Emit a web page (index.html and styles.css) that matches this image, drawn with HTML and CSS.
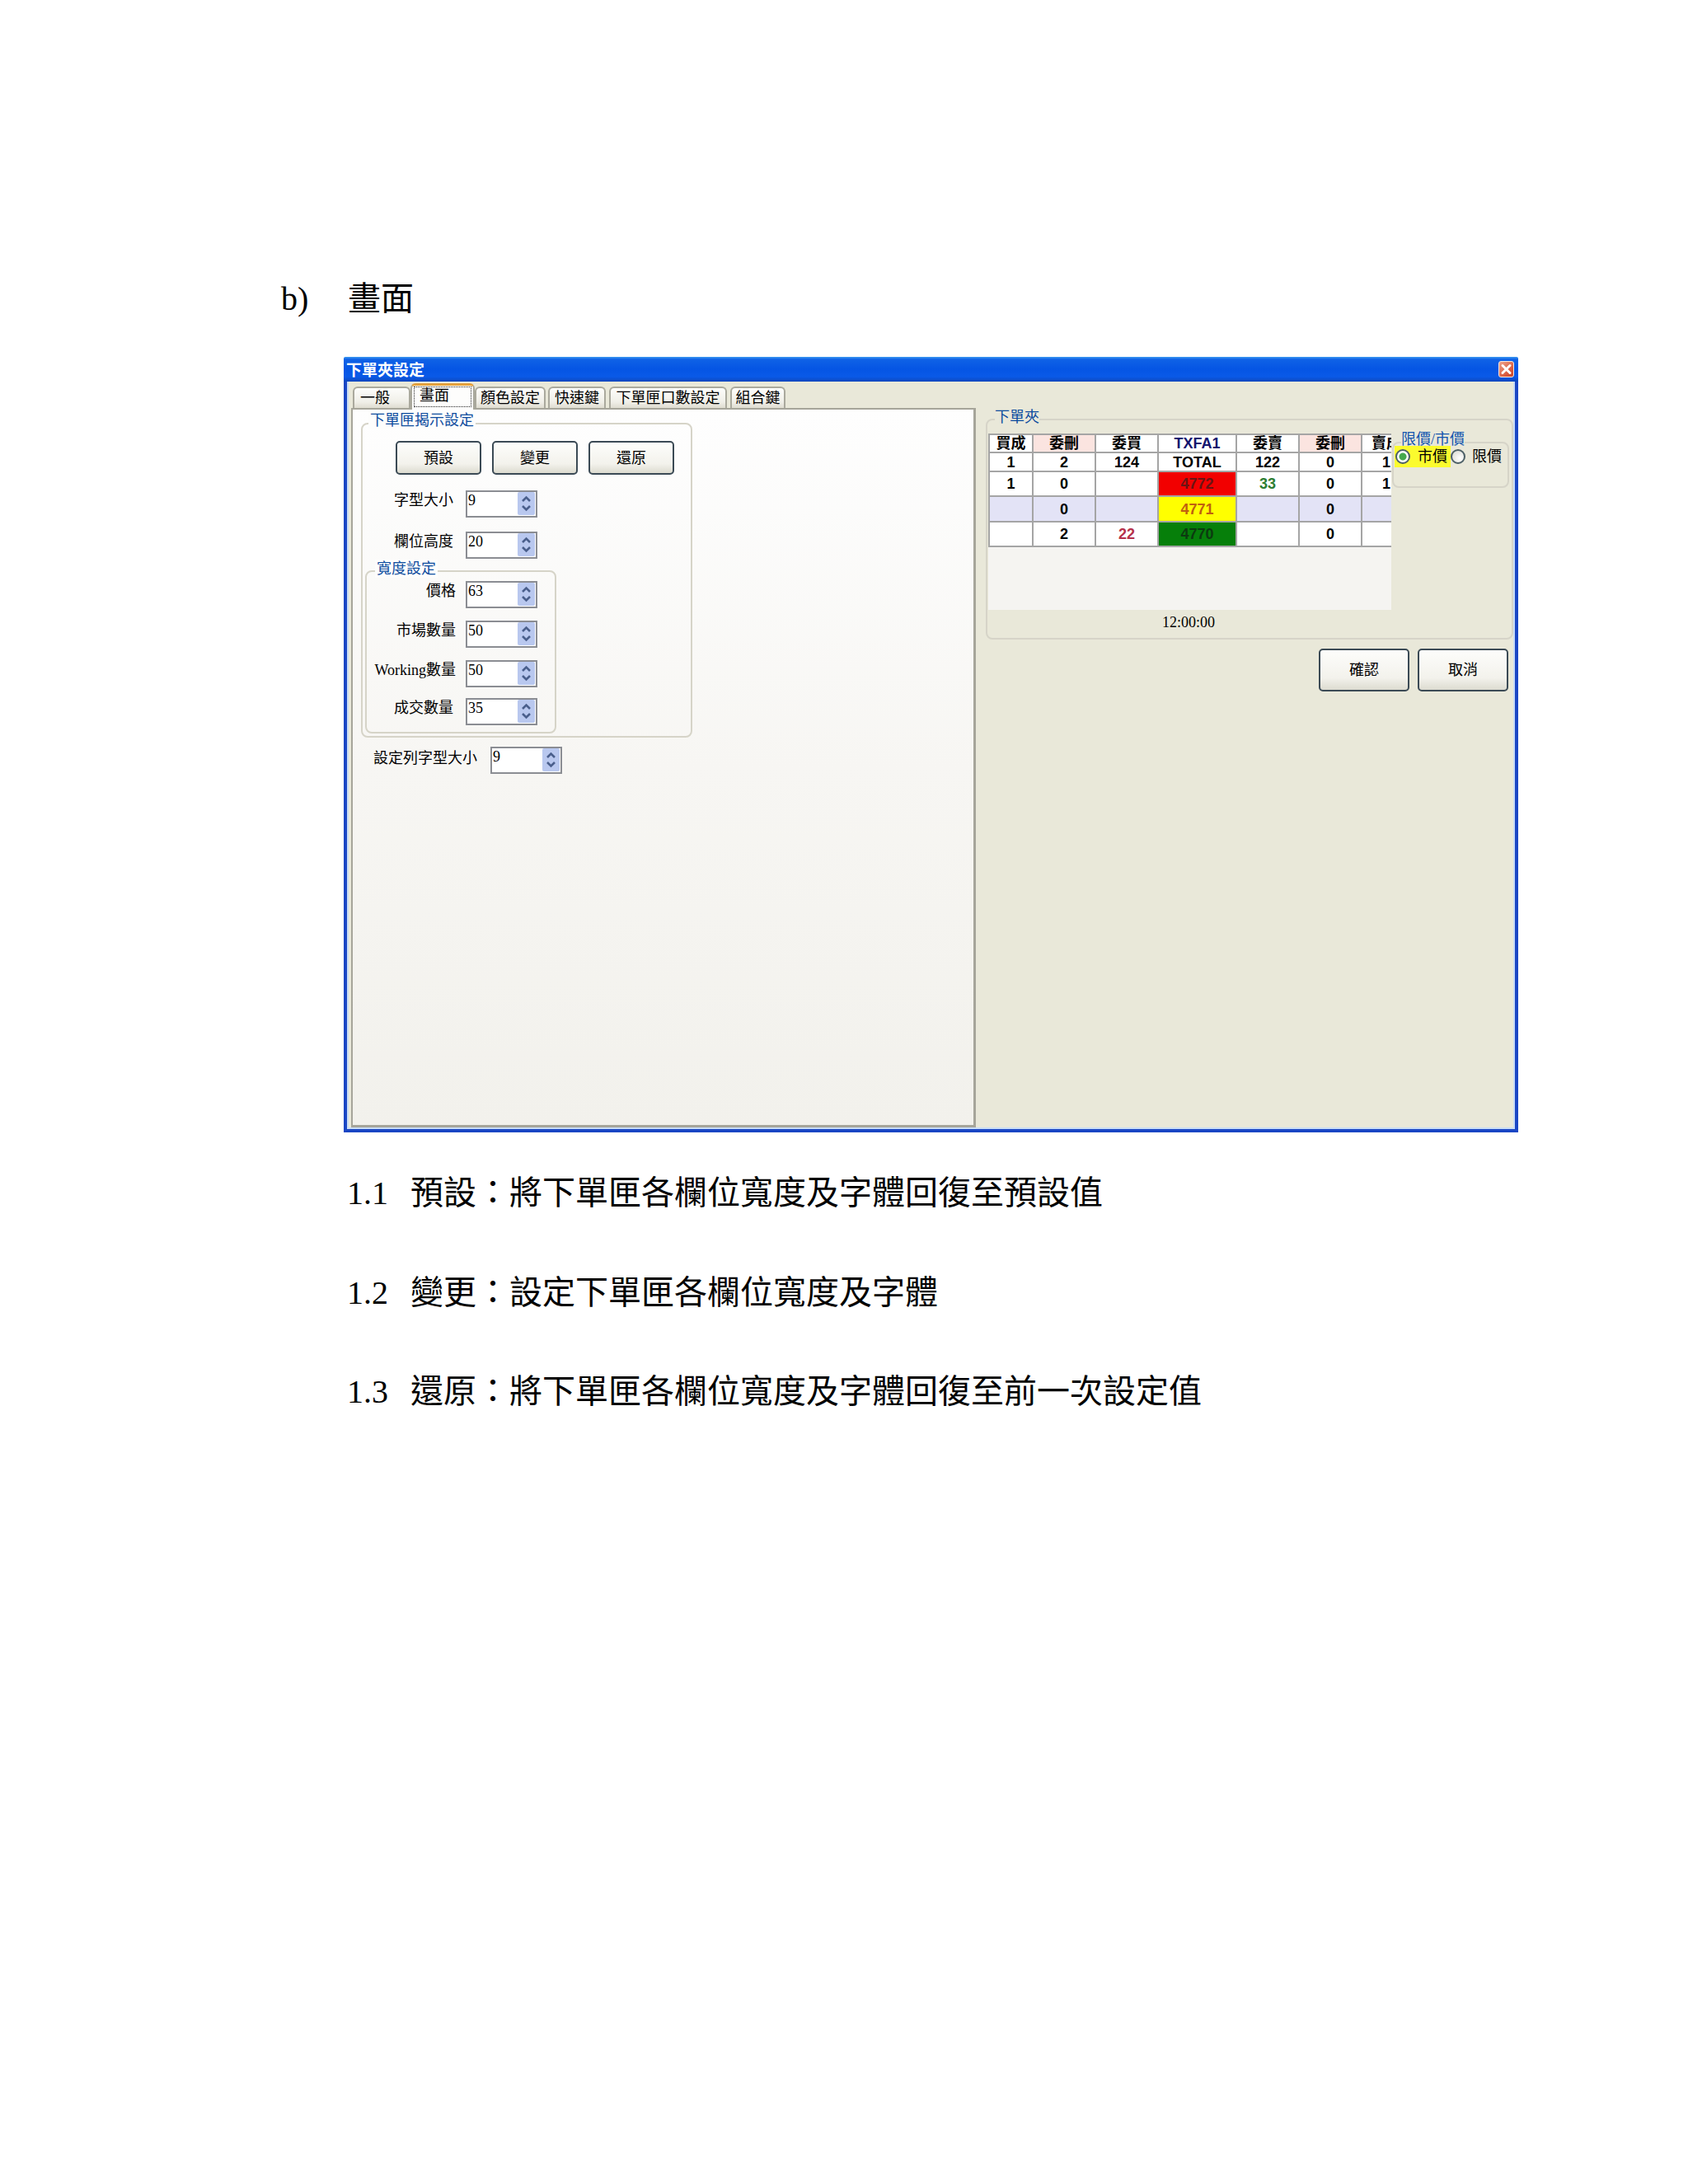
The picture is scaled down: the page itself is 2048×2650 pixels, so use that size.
FILE: index.html
```html
<!DOCTYPE html>
<html lang="zh-Hant">
<head>
<meta charset="utf-8">
<title>畫面</title>
<link rel="stylesheet" href="styles.css">
</head>
<body>
<main class="page">
  <h2 class="heading"><span class="heading-no">b)</span><span>畫面</span></h2>

  <section class="window">
    <header class="titlebar">
      <span class="title">下單夾設定</span>
      <span class="close"><svg viewBox="0 0 19 20" width="19" height="20"><path d="M5 5.5 14 14.5M14 5.5 5 14.5" stroke="#fff" stroke-width="3" stroke-linecap="round" fill="none"/></svg></span>
    </header>
    <div class="win-body">
      <div class="left-col">
        <nav class="tabs">
          <span class="tab t1">一般</span>
          <span class="tab active"><span class="focus">畫面</span></span>
          <span class="tab t3">顏色設定</span>
          <span class="tab t4">快速鍵</span>
          <span class="tab t5">下單匣口數設定</span>
          <span class="tab t6">組合鍵</span>
        </nav>
        <div class="panel">
          <div class="group g-main">
            <div class="legend l-main">下單匣揭示設定</div>
            <div class="btn-row">
              <button class="btn">預設</button>
              <button class="btn">變更</button>
              <button class="btn">還原</button>
            </div>
            <div class="row r-first">
              <span class="label lw-main">字型大小</span>
              <span class="spin"><span class="val">9</span><span class="arrows"><svg viewBox="0 0 21 28" width="21" height="28"><path d="M6 11 10.5 6.5 15 11M6 17 10.5 21.5 15 17" stroke="#4a5f8c" stroke-width="2.6" fill="none"/></svg></span></span>
            </div>
            <div class="row r-second">
              <span class="label lw-main">欄位高度</span>
              <span class="spin"><span class="val">20</span><span class="arrows"><svg viewBox="0 0 21 28" width="21" height="28"><path d="M6 11 10.5 6.5 15 11M6 17 10.5 21.5 15 17" stroke="#4a5f8c" stroke-width="2.6" fill="none"/></svg></span></span>
            </div>
            <div class="group g-width">
              <div class="legend l-width">寬度設定</div>
              <div class="row r-w1">
                <span class="label lw-width">價格</span>
                <span class="spin"><span class="val">63</span><span class="arrows"><svg viewBox="0 0 21 28" width="21" height="28"><path d="M6 11 10.5 6.5 15 11M6 17 10.5 21.5 15 17" stroke="#4a5f8c" stroke-width="2.6" fill="none"/></svg></span></span>
              </div>
              <div class="row r-w2">
                <span class="label lw-width">市場數量</span>
                <span class="spin"><span class="val">50</span><span class="arrows"><svg viewBox="0 0 21 28" width="21" height="28"><path d="M6 11 10.5 6.5 15 11M6 17 10.5 21.5 15 17" stroke="#4a5f8c" stroke-width="2.6" fill="none"/></svg></span></span>
              </div>
              <div class="row r-w2">
                <span class="label lw-width">Working數量</span>
                <span class="spin"><span class="val">50</span><span class="arrows"><svg viewBox="0 0 21 28" width="21" height="28"><path d="M6 11 10.5 6.5 15 11M6 17 10.5 21.5 15 17" stroke="#4a5f8c" stroke-width="2.6" fill="none"/></svg></span></span>
              </div>
              <div class="row r-w3">
                <span class="label lw-width inset">成交數量</span>
                <span class="spin"><span class="val">35</span><span class="arrows"><svg viewBox="0 0 21 28" width="21" height="28"><path d="M6 11 10.5 6.5 15 11M6 17 10.5 21.5 15 17" stroke="#4a5f8c" stroke-width="2.6" fill="none"/></svg></span></span>
              </div>
            </div>
          </div>
          <div class="row r-bar">
            <span class="label bar-label">設定列字型大小</span>
            <span class="spin"><span class="val">9</span><span class="arrows"><svg viewBox="0 0 21 28" width="21" height="28"><path d="M6 11 10.5 6.5 15 11M6 17 10.5 21.5 15 17" stroke="#4a5f8c" stroke-width="2.6" fill="none"/></svg></span></span>
          </div>
        </div>
      </div>

      <div class="right-col">
        <div class="group g-order">
          <div class="legend l-order">下單夾</div>
          <div class="order-row">
            <div class="ladder">
              <div class="ladder-box">
                <table class="grid">
                  <colgroup><col class="c1"><col class="c2"><col class="c3"><col class="c4"><col class="c5"><col class="c6"><col class="c7"></colgroup>
                  <tr class="rh">
                    <td>買成</td><td class="pink">委刪</td><td>委買</td><td class="navy">TXFA1</td><td>委賣</td><td class="pink">委刪</td><td>賣成</td>
                  </tr>
                  <tr class="r1">
                    <td>1</td><td>2</td><td>124</td><td>TOTAL</td><td>122</td><td>0</td><td>1</td>
                  </tr>
                  <tr class="r2">
                    <td>1</td><td>0</td><td></td><td class="p-red">4772</td><td class="t-green">33</td><td>0</td><td>1</td>
                  </tr>
                  <tr class="r3">
                    <td></td><td>0</td><td></td><td class="p-yellow">4771</td><td></td><td>0</td><td></td>
                  </tr>
                  <tr class="r4">
                    <td></td><td>2</td><td class="t-red">22</td><td class="p-green">4770</td><td></td><td>0</td><td></td>
                  </tr>
                </table>
              </div>
              <div class="clock">12:00:00</div>
            </div>
            <div class="group g-limit">
              <div class="legend l-limit">限價/市價</div>
              <div class="radios">
                <span class="yellow"><span class="radio on"></span><span class="radio-text">市價</span></span>
                <span class="radio"></span><span class="radio-text">限價</span>
              </div>
            </div>
          </div>
        </div>
        <div class="actions">
          <button class="btn big">確認</button>
          <button class="btn big">取消</button>
        </div>
      </div>
    </div>
  </section>

  <ol class="notes">
    <li class="note"><span class="note-no">1.1</span>預設：將下單匣各欄位寬度及字體回復至預設值</li>
    <li class="note"><span class="note-no">1.2</span>變更：設定下單匣各欄位寬度及字體</li>
    <li class="note"><span class="note-no">1.3</span>還原：將下單匣各欄位寬度及字體回復至前一次設定值</li>
  </ol>
</main>
</body>
</html>
```

FILE: styles.css
```css
* { box-sizing: border-box; }
html, body { margin: 0; background: #fff; }
body { font-family: "Liberation Serif", "Noto Sans CJK TC", serif; color: #000; height: 2650px; overflow: hidden; }

.page { padding: 338px 0 0 341px; }

.heading { margin: 0; display: flex; gap: 47px; font-size: 40px; font-weight: 400; line-height: 50px; height: 50px; }
.heading-no { width: 34px; }

/* window */
.window { width: 1425px; margin: 45px 0 0 76px; font-size: 18px; line-height: 24px; }
.titlebar { height: 30px; display: flex; align-items: center; padding: 0 5px 0 3px; color: #fff; border-radius: 2px 2px 0 0;
  background: linear-gradient(#3f9bf2 0, #0f62e6 10%, #0555e4 50%, #0a5ae8 80%, #0b46bd 100%); }
.title { font-weight: 700; font-size: 19px; line-height: 30px; padding-top: 3px; }
.close { margin-left: auto; width: 19px; height: 20px; display: block; border-radius: 3px; border: 1px solid #f4e8e0;
  background: linear-gradient(135deg, #eda68e, #d9583a 70%, #c8472b); overflow: hidden; }
.close svg { display: block; margin: -1px; }
.win-body { height: 911px; display: flex; padding: 2px 2px 2px 5px; background: #e9e8d9;
  border: 4px solid #1a46c4; border-top: 0; box-shadow: inset 2px 0 0 #c8dcf6, inset -2px 0 0 #c8dcf6, inset 0 -2px 0 #c8dcf6; }

/* left side */
.left-col { width: 758px; display: flex; flex-direction: column; }
.tabs { display: flex; padding-left: 2px; height: 30px; position: relative; z-index: 1; }
.tab { margin-top: 4px; height: 26px; line-height: 24px; text-align: center; white-space: nowrap;
  background: linear-gradient(#fdfdfb, #f0efe8 70%, #dedcd0); border: 2px solid #aaa99d; border-bottom: 0; border-radius: 6px 6px 0 0; }
.t1 { width: 70px; padding-right: 16px; }
.t3 { width: 86px; }
.t4 { width: 70px; margin-left: 3px; }
.t5 { width: 143px; margin-left: 4px; }
.t6 { width: 67px; margin-left: 4px; }
.active { width: 78px; margin-top: 0; height: 32px; background: #fdfdfc; border: 2px solid #aaa99d; border-top: 3px solid #e6a13c; border-bottom: 0; padding: 1px 2px 0; }
.focus { display: block; height: 25px; line-height: 20px; border: 1px dotted #222; text-align: left; padding-left: 6px; }
.panel { height: 873px; border: 2px solid #a6a59a; border-right-width: 3px; border-bottom-width: 3px;
  background: linear-gradient(#fefefe, #f7f6f3 50%, #f2f1ec); }

.group { border: 2px solid #d6d4c8; border-radius: 8px; }
.legend { display: table; height: 22px; line-height: 22px; color: #0d4c9e; padding: 0 2px; background: #fdfdfc; }
.g-main { width: 402px; height: 382px; margin: 16px 0 0 10px; }
.l-main { margin: -16px 0 0 7px; }
.btn-row { display: flex; gap: 13px; margin: 14px 0 0 40px; }
.btn { width: 104px; height: 41px; padding: 0; font: inherit; color: #000; border: 2px solid #3b4a55; border-radius: 5px;
  background: linear-gradient(#fdfdfb, #f3f2ec 70%, #dcdbd0); }

.row { display: flex; align-items: flex-start; }
.label { white-space: nowrap; text-align: right; }
.lw-main { width: 110px; margin-right: 15px; }
.lw-width { width: 108px; margin-right: 12px; }
.inset { padding-right: 3px; }
.bar-label { padding-top: 2px; }
.r-first { margin-top: 19px; }
.r-second { margin-top: 17px; }
.spin { width: 87px; height: 33px; flex: none; display: flex; border: 2px solid #8b8d93; background: #fff; padding: 0 1px 1px 1px; }
.val { flex: 1; line-height: 20px; }
.arrows { width: 21px; height: 28px; background: #b9c8ef; border-radius: 2px; }
.arrows svg { display: block; }

.g-width { width: 232px; height: 198px; margin: 14px 0 0 3px; }
.l-width { margin: -15px 0 0 10px; }
.r-w1 { margin-top: 4px; }
.r-w2 { margin-top: 15px; }
.r-w3 { margin-top: 13px; }
.r-bar { margin: 11px 0 0 25px; gap: 16px; }

/* right side */
.right-col { width: 640px; margin-left: 12px; padding-top: 43px; }
.g-order { height: 268px; }
.l-order { margin: -15px 0 0 9px; padding: 0; background: #e9e8d9; height: 22px; }
.order-row { display: flex; margin-top: 9px; }
.ladder { width: 489px; margin-left: 1px; }
.ladder-box { height: 214px; overflow: hidden; background: #f5f4f1; }
.grid { width: 513px; margin-left: 0; table-layout: fixed; border-collapse: collapse; font: 700 18px/20px "Liberation Sans", "Noto Sans CJK TC", sans-serif; }
.grid td { border: 2px solid #a5a5a5; padding: 0; text-align: center; background: #fff; overflow: hidden; white-space: nowrap; }
.c1 { width: 53px; } .c2 { width: 76px; } .c3 { width: 76px; } .c4 { width: 95px; }
.c5 { width: 76px; } .c6 { width: 76px; } .c7 { width: 60px; }
.rh td { height: 22px; } .r1 td { height: 23px; } .r2 td { height: 30px; } .r3 td { height: 31px; } .r4 td { height: 30px; }
.grid .pink { background: #fbe4e0; }
.navy { color: #14146e; }
.grid .r3 td { background: #e3e3f6; }
.grid .p-red { background: #f20000; color: #6b1414; }
.grid .r3 .p-yellow { background: #ffff00; color: #c0600f; }
.grid .p-green { background: #067f0a; color: #0c3a10; }
.t-green { color: #2e7d33; }
.t-red { color: #b5304a; }
.clock { height: 30px; line-height: 30px; text-align: center; width: 486px; }

.g-limit { width: 142px; height: 56px; margin: 10px 0 0 1px; }
.l-limit { margin: -16px 0 0 9px; padding: 0; background: #e9e8d9; color: #1455ae; }
.radios { display: flex; align-items: center; margin-top: -3px; }
.yellow { display: flex; align-items: center; width: 68px; height: 26px; margin-left: 1px; padding-left: 1px; background: #fbfb2e; }
.radio { width: 18px; height: 18px; flex: none; border-radius: 50%; border: 2px solid #4c5f66; background: radial-gradient(circle at 65% 65%, #fff, #d6d6cf); }
.radio.on { background: radial-gradient(circle, #46a84d 0 4px, #fff 5px); }
.radio-text { margin-left: 8px; }
.yellow .radio-text { margin-left: 9px; }

.actions { display: flex; justify-content: flex-end; gap: 10px; margin: 11px 6px 0 0; }
.big { width: 110px; height: 52px; }

/* notes */
.notes { list-style: none; margin: 49px 0 0 80px; padding: 0; font-size: 40px; line-height: 50px; }
.note { height: 50px; white-space: nowrap; }
.note + .note { margin-top: 70.5px; }
.note-no { display: inline-block; width: 77px; }
```
